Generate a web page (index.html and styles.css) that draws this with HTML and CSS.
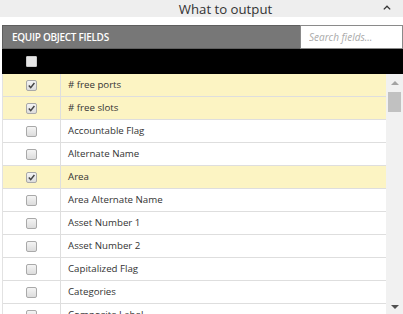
FILE: index.html
```html
<!DOCTYPE html>
<html lang="en">
<head>
  <meta charset="UTF-8" />
  <title>What to output</title>
  <link rel="stylesheet" href="styles.css">
</head>
<body>
  <div class="section-head">
    <span class="section-title">What to output</span>
    <span class="section-toggle">
      <svg width="8" height="5" viewBox="0 0 8 5"><polyline points="0.8,4.4 4,1.2 7.2,4.4" fill="none" stroke="#333" stroke-width="1.3"/></svg>
    </span>
  </div>

  <div class="fields">
    <div class="fields-bar">
      <div class="fields-title">EQUIP OBJECT FIELDS</div>
      <input class="fields-search" type="text" placeholder="Search fields...">
    </div>
    <div class="fields-all"><span class="box box-head"></span></div>
    <div class="fields-body">
      <div class="fields-list" id="fieldList"></div>
      <!-- scrollbar -->
      <div class="scrollbar">
        <div class="sb-btn"><span class="arrow-up"></span></div>
        <div class="sb-track"><div class="sb-thumb"></div></div>
        <div class="sb-btn"><span class="arrow-down"></span></div>
      </div>
    </div>
  </div>

  <script src="app.js"></script>
</body>
</html>
```

FILE: styles.css
```css
body { margin: 0; font-family: 'Open Sans', 'Liberation Sans', sans-serif; color: #333; background: #fff; }

.section-head { display: flex; align-items: center; height: 17px; background: #eeeeee; margin-bottom: 8px; }
.section-title { flex: 1; text-align: center; padding-left: 80px; padding-top: 2px; font-size: 13.2px; line-height: 15px; }
.section-toggle { width: 32px; display: flex; justify-content: center; padding-bottom: 2px; }

.fields { margin-left: 2px; }
.fields-bar { display: flex; height: 24px; }
.fields-title { width: 298px; box-sizing: border-box; background: #777; border: 1px solid #5e5e5e; border-right: none; color: #fff; font-size: 10px; font-weight: 600; letter-spacing: -0.3px; line-height: 22px; padding-left: 9px; }
.fields-search { flex: 1; min-width: 0; box-sizing: border-box; margin: 0; border: 1px solid #8a8a8a; padding: 0 8px; font-family: inherit; font-size: 10px; color: #333; }
.fields-search::placeholder { color: #aaa; font-style: italic; }

.fields-all { height: 25px; background: #000; display: flex; align-items: center; padding-left: 24px; }

.fields-body { display: flex; height: 240px; }
.fields-list { flex: 1; overflow: hidden; border-left: 1px solid #e2e2e2; }
.row { display: flex; height: 22px; border-bottom: 1px solid #dedede; font-size: 9.7px; }
.row.on { background: #fcf4c3; }
.row-check { width: 57px; flex-shrink: 0; border-right: 1px solid #dedede; display: flex; align-items: center; justify-content: center; }
.row-name { padding-left: 7px; line-height: 22px; white-space: nowrap; }

.box { display: block; width: 9px; height: 9px; border: 1px solid #a9a9a9; border-radius: 2px; background: linear-gradient(#f4f4f4, #dcdcdc); }
.box svg { display: block; }
.box-head { border-color: #c8c8c8; background: #e6e6e6; border-radius: 1px; }

.scrollbar { width: 17px; background: #f1f1f1; display: flex; flex-direction: column; }
.sb-btn { height: 17px; display: flex; align-items: center; justify-content: center; }
.sb-track { flex: 1; }
.sb-thumb { width: 13px; height: 20px; margin: 1px auto 0; background: #c1c1c1; }
.arrow-up { width: 0; height: 0; border-left: 4px solid transparent; border-right: 4px solid transparent; border-bottom: 4px solid #a3a3a3; }
.arrow-down { width: 0; height: 0; border-left: 4px solid transparent; border-right: 4px solid transparent; border-top: 4px solid #505050; margin-top: 2px; }
```

FILE: app.js
```js
const fields = ["# free ports", "# free slots", "Accountable Flag", "Alternate Name", "Area",
  "Area Alternate Name", "Asset Number 1", "Asset Number 2", "Capitalized Flag", "Categories",
  "Composite Label", "Condition", "Cost", "Cost Center", "Current Value", "Date Acquired"];
const checked = ["# free ports", "# free slots", "Area"];

const list = document.getElementById("fieldList");
const tick = '<svg width="9" height="9" viewBox="0 0 9 9"><polyline points="1.8,4.6 3.7,6.6 7.4,2" fill="none" stroke="#444" stroke-width="1.5"/></svg>';

fields.forEach(name => {
  const on = checked.includes(name);
  list.innerHTML += `<div class="row${on ? " on" : ""}"><div class="row-check"><span class="box">${on ? tick : ""}</span></div><div class="row-name">${name}</div></div>`;
});
```
